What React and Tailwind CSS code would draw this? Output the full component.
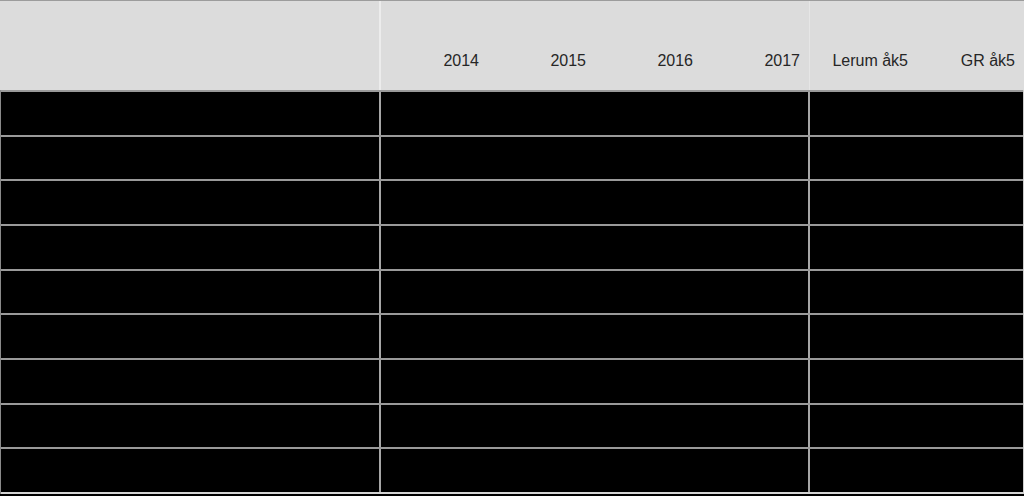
import React from 'react';

const years = ['2014', '2015', '2016', '2017'];
const rows = Array.from({ length: 9 });

export default function App() {
  return (
    <div className="w-[1024px] h-[496px] bg-black overflow-hidden font-['Liberation_Sans',Arial,sans-serif]">
      {/* header */}
      <div className="flex h-[90px] bg-[#dcdcdc] border-t border-[#9c9c9c] text-[16px] leading-[20px] text-[#262626]">
        <div className="w-[381px] border-r-2 border-[#ececec]" />
        <div className="flex w-[429px] border-r border-[#e6e6e6]">
          {years.map((y) => (
            <div key={y} className="flex-1 flex items-end justify-end pb-[19px] pr-[9px]">
              {y}
            </div>
          ))}
        </div>
        <div className="flex flex-1">
          <div className="flex-1 flex items-end justify-end pb-[19px] pr-[9px]">Lerum åk5</div>
          <div className="flex-1 flex items-end justify-end pb-[19px] pr-[9px]">GR åk5</div>
        </div>
      </div>

      {/* body */}
      <div className="border-l border-[#8a8a8a] border-r border-r-[#cfcfcf]">
        {rows.map((_, i) => (
          <div key={i} className="flex h-[44.67px] border-t-2 border-[#9a9a9a]">
            <div className="w-[380px] border-r-2 border-[#a6a6a6]" />
            <div className="w-[429px] border-r-2 border-[#a6a6a6]" />
            <div className="flex-1" />
          </div>
        ))}
        <div className="h-[2px] bg-[#d4d4d4]" />
      </div>
    </div>
  );
}
